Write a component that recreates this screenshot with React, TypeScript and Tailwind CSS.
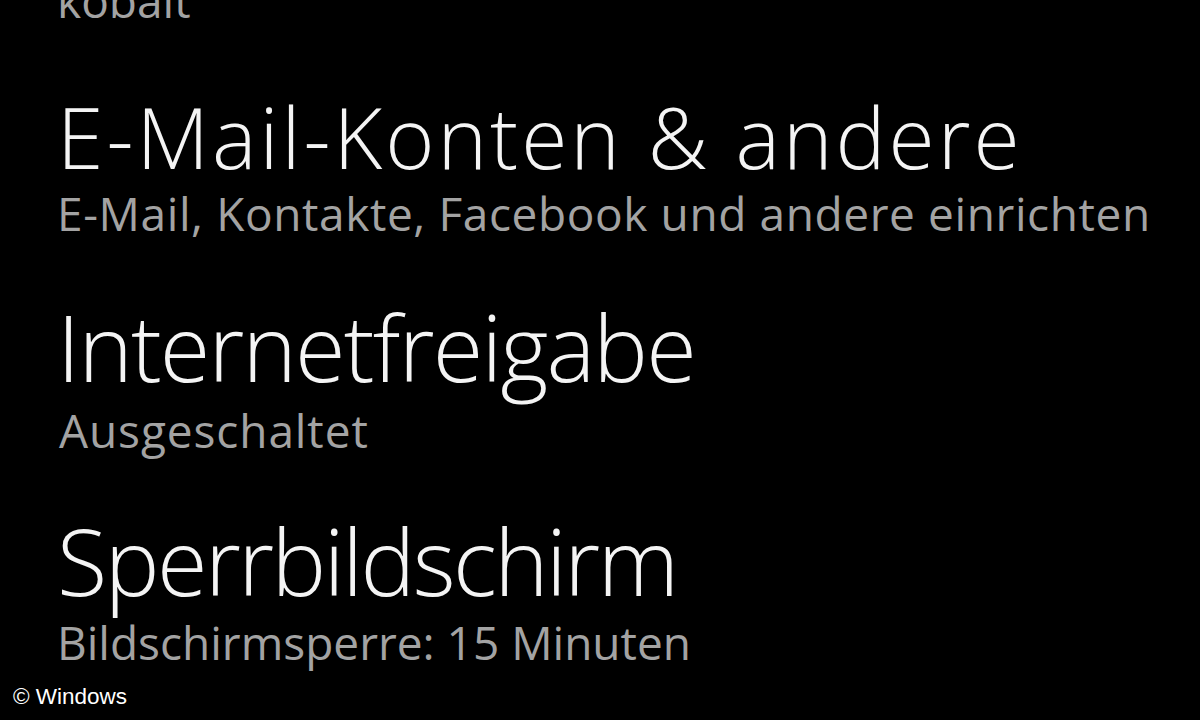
export default function App() {
  const title = "text-[#f4f4f4] font-light whitespace-nowrap";
  const sub = "text-[#a3a3a3] whitespace-nowrap text-[46px] leading-[52px] h-[52px]";
  return (
    <div
      className="w-[1200px] h-[720px] bg-black overflow-hidden flex flex-col"
      style={{ fontFamily: '"Open Sans", "Noto Sans", sans-serif' }}
    >
      <div className="flex flex-col pl-[57px]">
        <div className={`${sub} -mt-[30px] h-[60px] leading-[60px]`}>kobalt</div>
        <div className={`${title} mt-[57px] text-[84px] leading-[100px] h-[100px] tracking-[3px]`}>E-Mail-Konten &amp; andere</div>
        <div className={`${sub} tracking-[0.6px]`}>E-Mail, Kontakte, Facebook und andere einrichten</div>
        <div className={`${title} mt-[58px] text-[92px] leading-[100px] h-[100px] tracking-[-1.8px]`}>Internetfreigabe</div>
        <div className={`${sub} mt-[7px] pl-[2px] tracking-[0.9px]`}>Ausgeschaltet</div>
        <div className={`${title} mt-[55px] text-[92px] leading-[100px] h-[100px] tracking-[-2.5px]`}>Sperrbildschirm</div>
        <div className={`${sub} mt-[5px]`}>Bildschirmsperre: 15 Minuten</div>
      </div>
      <div
        className="mt-[17px] pl-[13px] text-white text-[22.5px] leading-[24px] h-[24px]"
        style={{ fontFamily: '"Liberation Sans", Arial, sans-serif' }}
      >
        © Windows
      </div>
    </div>
  );
}
